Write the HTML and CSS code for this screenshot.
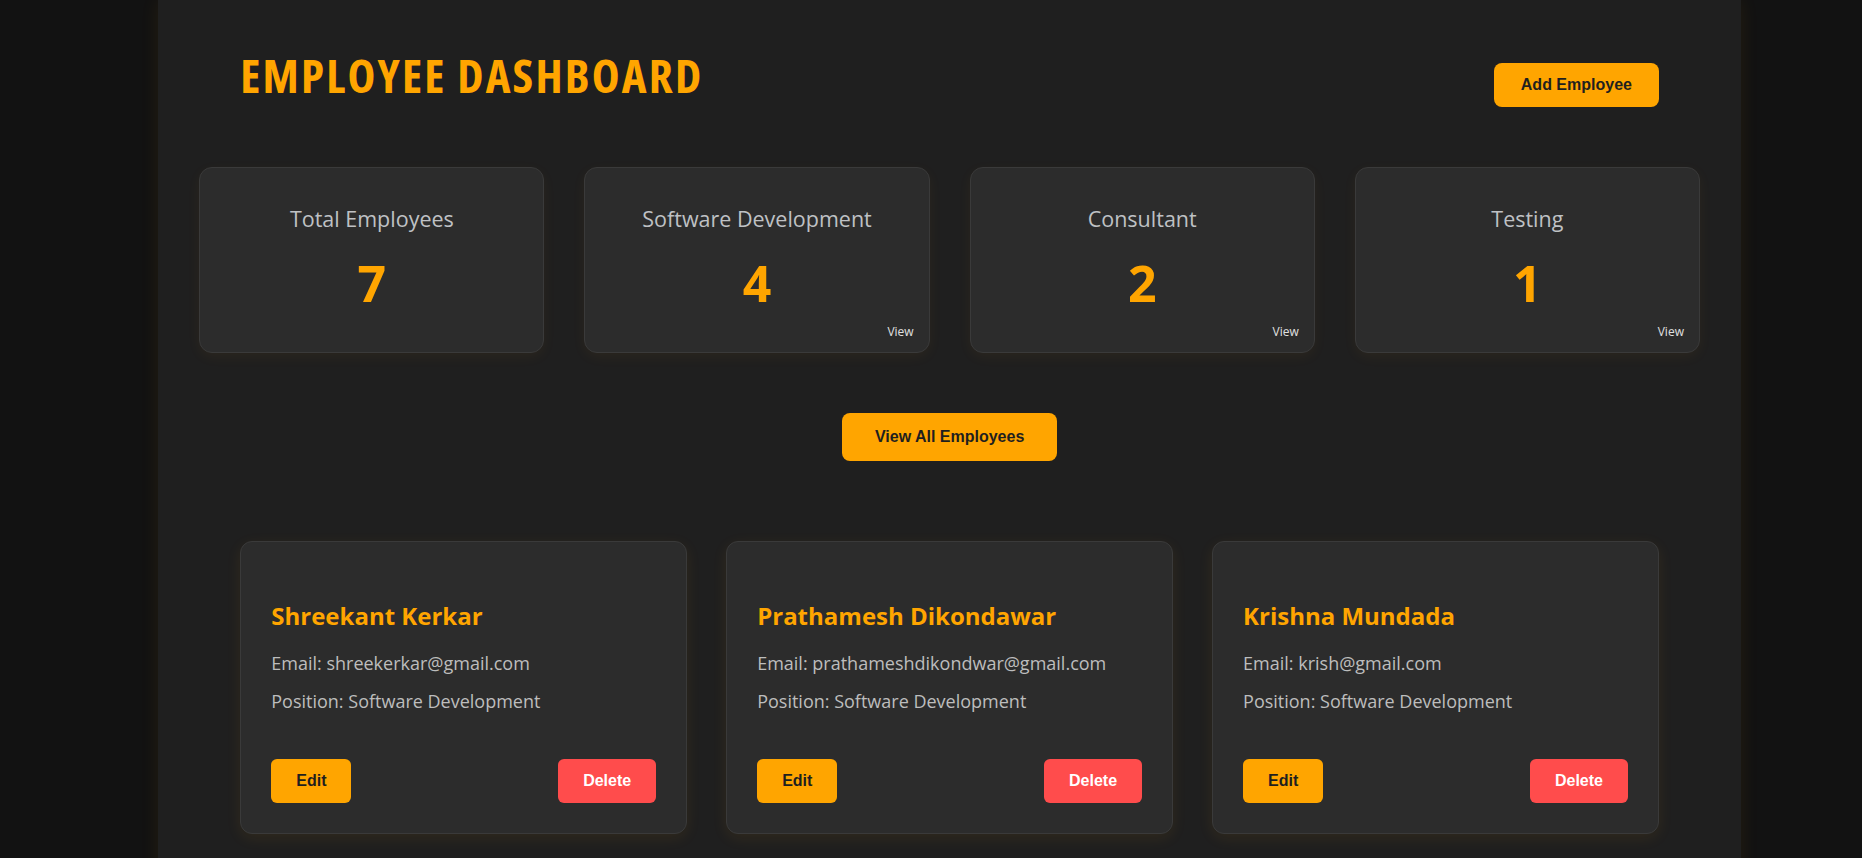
FILE: index.html
```html
<!DOCTYPE html>
<html lang="en">
<head>
<meta charset="UTF-8">
<title>Employee Dashboard</title>
<link rel="stylesheet" href="styles.css">
</head>
<body>
<div class="container">
  <header class="header">
    <h1 class="title">EMPLOYEE DASHBOARD</h1>
    <button class="btn btn-primary btn-add">Add Employee</button>
  </header>

  <section class="stats">
    <div class="stat-card">
      <h3 class="stat-label">Total Employees</h3>
      <p class="stat-value">7</p>
    </div>
    <div class="stat-card">
      <h3 class="stat-label">Software Development</h3>
      <p class="stat-value">4</p>
      <a class="stat-view">View</a>
    </div>
    <div class="stat-card">
      <h3 class="stat-label">Consultant</h3>
      <p class="stat-value">2</p>
      <a class="stat-view">View</a>
    </div>
    <div class="stat-card">
      <h3 class="stat-label">Testing</h3>
      <p class="stat-value">1</p>
      <a class="stat-view">View</a>
    </div>
  </section>

  <div class="view-all-row">
    <button class="btn btn-primary btn-view-all">View All Employees</button>
  </div>

  <section class="employees">
    <div class="emp-card">
      <h3 class="emp-name">Shreekant Kerkar</h3>
      <p class="emp-line">Email: shreekerkar@gmail.com</p>
      <p class="emp-line emp-pos">Position: Software Development</p>
      <div class="emp-actions">
        <button class="btn btn-primary btn-small">Edit</button>
        <button class="btn btn-danger btn-small">Delete</button>
      </div>
    </div>
    <div class="emp-card">
      <h3 class="emp-name">Prathamesh Dikondawar</h3>
      <p class="emp-line">Email: prathameshdikondwar@gmail.com</p>
      <p class="emp-line emp-pos">Position: Software Development</p>
      <div class="emp-actions">
        <button class="btn btn-primary btn-small">Edit</button>
        <button class="btn btn-danger btn-small">Delete</button>
      </div>
    </div>
    <div class="emp-card">
      <h3 class="emp-name">Krishna Mundada</h3>
      <p class="emp-line">Email: krish@gmail.com</p>
      <p class="emp-line emp-pos">Position: Software Development</p>
      <div class="emp-actions">
        <button class="btn btn-primary btn-small">Edit</button>
        <button class="btn btn-danger btn-small">Delete</button>
      </div>
    </div>
  </section>
</div>
</body>
</html>
```

FILE: styles.css
```css
* {
  box-sizing: border-box;
}

html, body {
  margin: 0;
  padding: 0;
}

body {
  background: #121212;
  font-family: "Open Sans", "Noto Sans", sans-serif;
  color: #bdbdbd;
  overflow: hidden;
}

.container {
  width: 85%;
  margin-left: 8.5%;
  min-height: 900px;
  background: #1f1f1f;
  padding: 43px 41px 40px;
  box-shadow: 0 0 18px rgba(255, 165, 0, 0.08);
}

.header {
  display: flex;
  justify-content: space-between;
  align-items: flex-start;
  padding: 0 41px;
}

.title {
  margin: 0;
  font-size: 47px;
  line-height: 64px;
  font-weight: 700;
  font-stretch: 75%;
  letter-spacing: 2.2px;
  color: #ffa500;
}

.btn {
  border: none;
  cursor: pointer;
  font-family: "Liberation Sans", Arial, sans-serif;
  font-weight: 700;
  font-size: 16px;
  line-height: 18px;
}

.btn-primary {
  background: #ffa500;
  color: #1f1f1f;
}

.btn-danger {
  background: #ff4c4c;
  color: #ffffff;
}

.btn-add {
  margin-top: 20px;
  padding: 13px 27px;
  border-radius: 8px;
}

.stats {
  display: grid;
  grid-template-columns: repeat(4, 1fr);
  gap: 40px;
  margin-top: 60px;
}

.stat-card {
  position: relative;
  background: #2c2c2c;
  border: 1px solid #3a3a3a;
  border-radius: 13px;
  padding: 38px 20px 39px;
  text-align: center;
  box-shadow: 0 4px 14px rgba(255, 165, 0, 0.05);
}

.stat-label {
  margin: 0;
  font-size: 21.5px;
  line-height: 26px;
  font-weight: 400;
  color: #bfc1c4;
}

.stat-value {
  margin: 21px 0 0;
  font-size: 50px;
  line-height: 60px;
  font-weight: 700;
  color: #ffa500;
}

.stat-view {
  position: absolute;
  right: 15px;
  bottom: 13px;
  font-size: 12px;
  line-height: 14px;
  color: #e0e0e0;
  cursor: pointer;
}

.view-all-row {
  display: flex;
  justify-content: center;
  margin-top: 60px;
}

.btn-view-all {
  padding: 15px 33px;
  border-radius: 8px;
}

.employees {
  display: grid;
  grid-template-columns: repeat(3, 1fr);
  gap: 39px;
  margin: 80px 41px 0;
}

.emp-card {
  background: #2c2c2c;
  border: 1px solid #3a3a3a;
  border-radius: 12px;
  padding: 30px;
  box-shadow: 0 4px 15px rgba(255, 165, 0, 0.08);
}

.emp-name {
  margin: 28px 0 0;
  font-size: 24px;
  line-height: 32px;
  font-weight: 700;
  color: #ffa500;
}

.emp-line {
  margin: 18px 0 0;
  font-size: 18px;
  line-height: 26px;
  color: #bdbdbd;
}

.emp-pos {
  margin-top: 12px;
}

.emp-actions {
  display: flex;
  justify-content: space-between;
  margin-top: 45px;
}

.btn-small {
  padding: 13px 25px;
  border-radius: 6px;
}
```
